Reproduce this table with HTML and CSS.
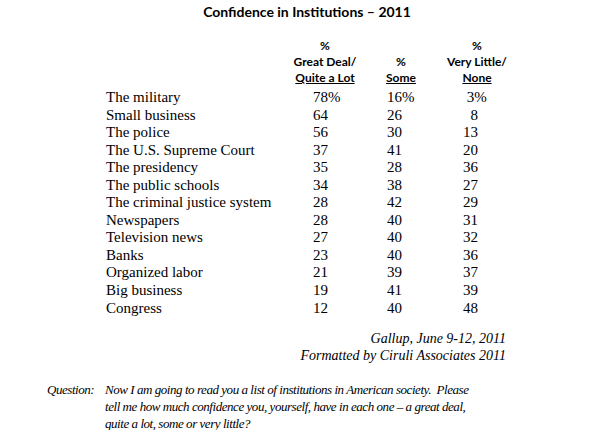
FILE: index.html
```html
<!DOCTYPE html>
<html>
<head>
<meta charset="utf-8">
<link rel="stylesheet" href="styles.css">
</head>
<body>
<div class="page">
  <h1 class="title">Confidence in Institutions – 2011</h1>
  <div class="heads">
    <div class="head"><span>%</span><span>Great Deal/</span><span class="u">Quite a Lot</span></div>
    <div class="head"><span>%</span><span class="u">Some</span></div>
    <div class="head"><span>%</span><span>Very Little/</span><span class="u">None</span></div>
  </div>
  <div class="table">
    <div class="lbl">The military</div><div class="n">78%</div><div class="n">16%</div><div class="n c3">&nbsp;3%</div>
    <div class="lbl">Small business</div><div class="n">64</div><div class="n">26</div><div class="n c3">&nbsp;&nbsp;8</div>
    <div class="lbl">The police</div><div class="n">56</div><div class="n">30</div><div class="n c3">13</div>
    <div class="lbl">The U.S. Supreme Court</div><div class="n">37</div><div class="n">41</div><div class="n c3">20</div>
    <div class="lbl">The presidency</div><div class="n">35</div><div class="n">28</div><div class="n c3">36</div>
    <div class="lbl">The public schools</div><div class="n">34</div><div class="n">38</div><div class="n c3">27</div>
    <div class="lbl">The criminal justice system</div><div class="n">28</div><div class="n">42</div><div class="n c3">29</div>
    <div class="lbl">Newspapers</div><div class="n">28</div><div class="n">40</div><div class="n c3">31</div>
    <div class="lbl">Television news</div><div class="n">27</div><div class="n">40</div><div class="n c3">32</div>
    <div class="lbl">Banks</div><div class="n">23</div><div class="n">40</div><div class="n c3">36</div>
    <div class="lbl">Organized labor</div><div class="n">21</div><div class="n">39</div><div class="n c3">37</div>
    <div class="lbl">Big business</div><div class="n">19</div><div class="n">41</div><div class="n c3">39</div>
    <div class="lbl">Congress</div><div class="n">12</div><div class="n">40</div><div class="n c3">48</div>
  </div>
  <div class="source">
    <div>Gallup, June 9-12, 2011</div>
    <div>Formatted by Ciruli Associates 2011</div>
  </div>
  <div class="question">
    <div class="qlabel">Question:</div>
    <div class="qtext">
      <span class="ql">Now I am going to read you a list of institutions in American society.&nbsp; Please</span>
      <span class="ql">tell me how much confidence you, yourself, have in each one – a great deal,</span>
      <span class="ql">quite a lot, some or very little?</span>
    </div>
  </div>
</div>
</body>
</html>
```

FILE: styles.css
```css
html, body {
  margin: 0;
  padding: 0;
  background: #ffffff;
}
.page {
  width: 614px;
  height: 430px;
  overflow: hidden;
  color: #000;
  font-family: "Liberation Serif", "Times New Roman", serif;
}
.title {
  margin: 0;
  padding-top: 3px;
  text-align: center;
  font-family: Lato, "Liberation Sans", sans-serif;
  font-weight: 700;
  font-size: 14px;
  line-height: 18px;
}
.heads {
  display: grid;
  grid-template-columns: 76px 76px 76px;
  padding-left: 287px;
  margin-top: 17px;
  align-items: end;
}
.head {
  display: flex;
  flex-direction: column;
  align-items: center;
  font-family: Lato, "Liberation Sans", sans-serif;
  font-weight: 700;
  font-size: 12px;
  line-height: 16px;
}
.u {
  text-decoration: underline;
}
.table {
  display: grid;
  grid-template-columns: 207px 74px 76px 60px;
  padding-left: 106px;
  margin-top: 3px;
  font-size: 15px;
  line-height: 17.55px;
}
.source {
  display: flex;
  flex-direction: column;
  align-items: flex-end;
  width: 506px;
  margin-top: 13px;
  font-style: italic;
  font-size: 14px;
  line-height: 17px;
}
.question {
  display: flex;
  padding-left: 47px;
  margin-top: 17px;
  font-style: italic;
  font-size: 13px;
  line-height: 17px;
  letter-spacing: -0.45px;
}
.qlabel {
  width: 58px;
  flex: none;
}
.qtext {
  display: flex;
  flex-direction: column;
  white-space: nowrap;
}
```
